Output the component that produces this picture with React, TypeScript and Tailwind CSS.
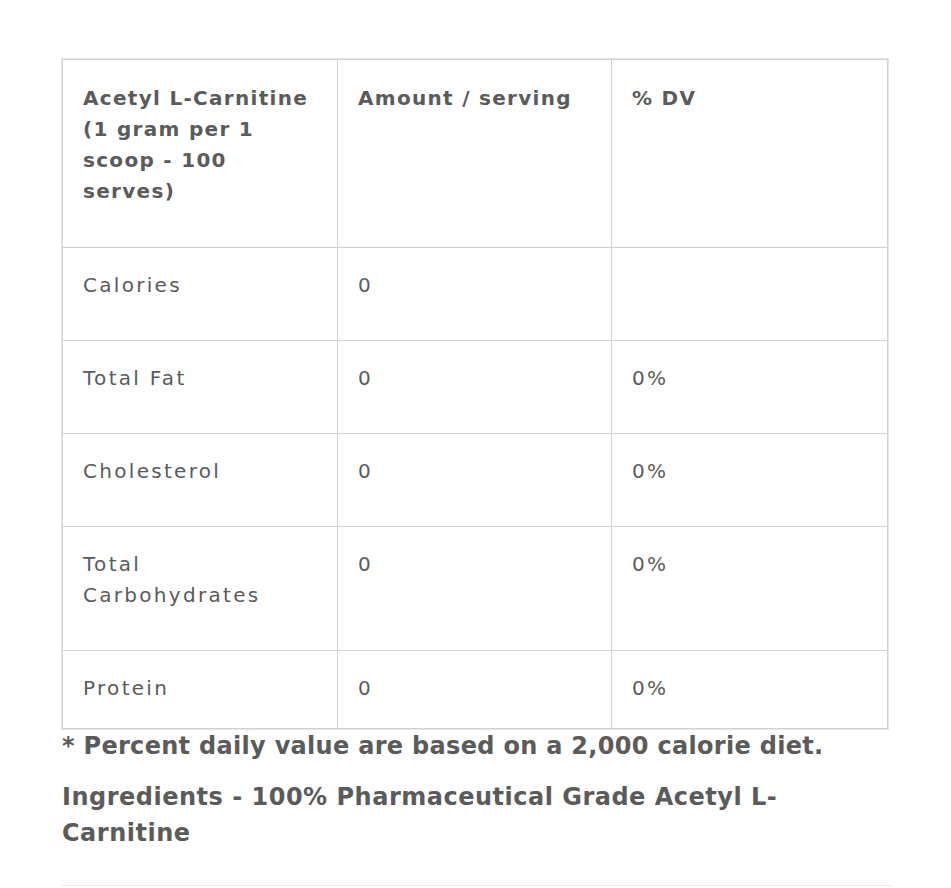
import React from "react"

const rows = [
  { name: "Calories", amount: "0", dv: "" },
  { name: "Total Fat", amount: "0", dv: "0%" },
  { name: "Cholesterol", amount: "0", dv: "0%" },
  { name: "Total Carbohydrates", amount: "0", dv: "0%" },
  { name: "Protein", amount: "0", dv: "0%" },
]

const headers = ["Acetyl L-Carnitine (1 gram per 1 scoop - 100 serves)", "Amount / serving", "% DV"]

export default function App() {
  return (
    <div className="min-h-screen bg-white pt-[59px] pl-[62px] text-[#5b5b5b]" style={{ fontFamily: "'DejaVu Sans', Verdana, sans-serif" }}>
      <div className="w-[831px]">
        {/* nutrition table */}
        <table className="w-[826px] table-fixed border-collapse shadow-[0_0_0_1px_#e6e6e6]">
          <colgroup>
            <col className="w-[275px]" />
            <col className="w-[274px]" />
            <col />
          </colgroup>
          <thead>
            <tr>
              {headers.map((h, i) => (
                <th
                  key={h}
                  className={`border border-[#d2d2d2] pl-[20px] ${i === 0 ? "pr-[27px]" : "pr-[20px]"} pt-[23px] pb-[40px] text-left align-top text-[20px] leading-[31px] font-bold tracking-[1.3px]`}
                >
                  {h}
                </th>
              ))}
            </tr>
          </thead>
          <tbody>
            {rows.map((r, i) => {
              const pad = i === rows.length - 1 ? "pt-[22px] pb-[24px]" : "pt-[22px] pb-[39px]"
              return (
                <tr key={r.name}>
                  {[r.name, r.amount, r.dv].map((v, j) => (
                    <td
                      key={j}
                      className={`border border-[#d2d2d2] px-[20px] ${pad} align-top text-[20px] leading-[31px] tracking-[2.3px]`}
                    >
                      {v}
                    </td>
                  ))}
                </tr>
              )
            })}
          </tbody>
        </table>

        <p className="-mt-[1px] text-[24px] leading-[36px] font-bold tracking-[0.3px]">
          * Percent daily value are based on a 2,000 calorie diet.
        </p>
        <p className="mt-[15px] text-[24px] leading-[36px] font-bold tracking-[0.5px]">
          Ingredients - 100% Pharmaceutical Grade Acetyl L-Carnitine
        </p>
        <div className="mt-[34px] border-t border-[#ececec]" />
      </div>
    </div>
  )
}
